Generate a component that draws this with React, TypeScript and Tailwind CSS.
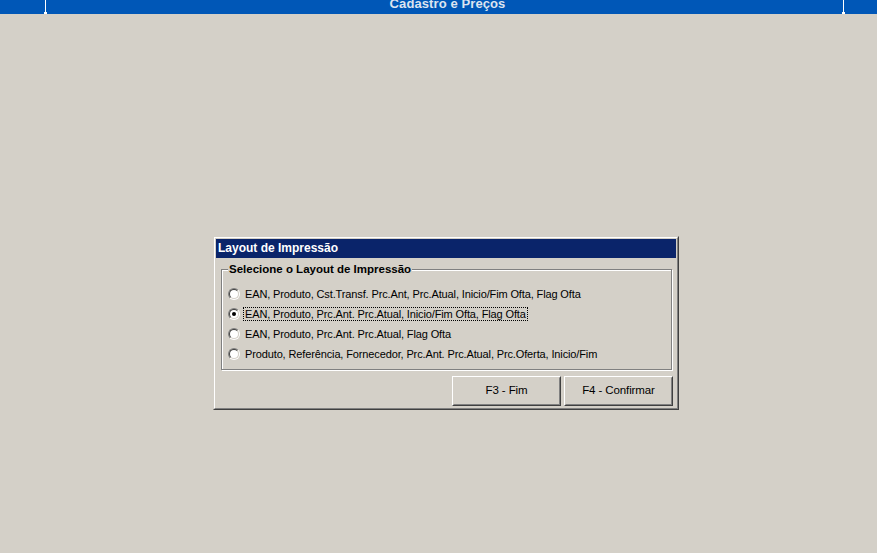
import React from "react";

const options = [
  "EAN, Produto, Cst.Transf. Prc.Ant, Prc.Atual, Inicio/Fim Ofta, Flag Ofta",
  "EAN, Produto, Prc.Ant. Prc.Atual, Inicio/Fim Ofta, Flag Ofta",
  "EAN, Produto, Prc.Ant. Prc.Atual, Flag Ofta",
  "Produto, Referência, Fornecedor, Prc.Ant. Prc.Atual, Prc.Oferta, Inicio/Fim",
];

function Radio({ checked }: { checked: boolean }) {
  return (
    <div className="w-[12px] h-[12px] rounded-full border border-t-[#808080] border-l-[#808080] border-b-white border-r-white shrink-0">
      <div className="w-full h-full rounded-full border border-t-[#404040] border-l-[#404040] border-b-[#D4D0C8] border-r-[#D4D0C8] bg-white flex items-center justify-center">
        {checked && <div className="w-[4px] h-[4px] rounded-full bg-black" />}
      </div>
    </div>
  );
}

function Button({ label }: { label: string }) {
  return (
    <div className="w-[109px] h-[30px] border border-t-white border-l-white border-b-[#404040] border-r-[#404040] bg-[#D4D0C8]">
      <div className="w-full h-full border border-t-[#D4D0C8] border-l-[#D4D0C8] border-b-[#808080] border-r-[#808080] flex items-center justify-center text-[11.5px] tracking-[-0.1px] text-black">
        {label}
      </div>
    </div>
  );
}

export default function App() {
  return (
    <div
      className="w-[877px] h-[553px] bg-[#D4D0C8] overflow-hidden flex flex-col"
      style={{ fontFamily: '"Liberation Sans", Arial, sans-serif' }}
    >
      {/* top bar */}
      <div className="h-[14px] bg-[#0057B7] relative overflow-hidden flex justify-center shrink-0">
        <div className="text-[13px] font-bold leading-[13px] mt-[-3px] text-[#DCE4F0] tracking-[0.1px] pl-[18px]">
          Cadastro e Preços
        </div>
        <div className="absolute left-[45px] top-0 w-[1px] h-[14px] bg-white" />
        <div className="absolute left-[44px] top-[12px] w-[3px] h-[2px] bg-white" />
        <div className="absolute left-[843px] top-0 w-[1px] h-[14px] bg-white" />
        <div className="absolute left-[842px] top-[12px] w-[3px] h-[2px] bg-white" />
      </div>

      <div className="pt-[222px] pl-[213px]">
        {/* dialog */}
        <div className="w-[466px] h-[174px] border border-t-[#D4D0C8] border-l-[#D4D0C8] border-b-[#404040] border-r-[#404040]">
          <div className="w-full h-full border border-t-white border-l-white border-b-[#808080] border-r-[#808080] flex flex-col">
            <div className="h-[19px] mt-[1px] mx-[1px] bg-[#0A246A] text-white text-[12px] font-bold leading-[19px] pl-[2px] shrink-0">
              Layout de Impressão
            </div>
            {/* group box */}
            <div className="ml-[6px] mr-[5px] mt-[11px] h-[101px] relative border border-[#808080] shadow-[1px_1px_0_#fff,inset_1px_1px_0_#fff]">
              <div className="absolute left-[6px] top-[-8px] px-[1px] bg-[#D4D0C8] text-[11.5px] font-bold leading-[14px] text-black">
                Selecione o Layout de Impressão
              </div>
              <div className="flex flex-col pt-[17px] pl-[6px] gap-[6px]">
                {options.map((o, i) => (
                  <div key={i} className="flex items-center h-[14px]">
                    <Radio checked={i === 1} />
                    <div
                      className={
                        "ml-[3px] px-[1px] h-[14px] leading-[12px] text-[11px] tracking-[-0.13px] text-black whitespace-nowrap border " +
                        (i === 1 ? "border-dotted border-black" : "border-transparent")
                      }
                    >
                      {o}
                    </div>
                  </div>
                ))}
              </div>
            </div>
            <div className="flex justify-end gap-[3px] mt-[6px] mr-[4px]">
              <Button label="F3 - Fim" />
              <Button label="F4 - Confirmar" />
            </div>
          </div>
        </div>
      </div>
    </div>
  );
}
